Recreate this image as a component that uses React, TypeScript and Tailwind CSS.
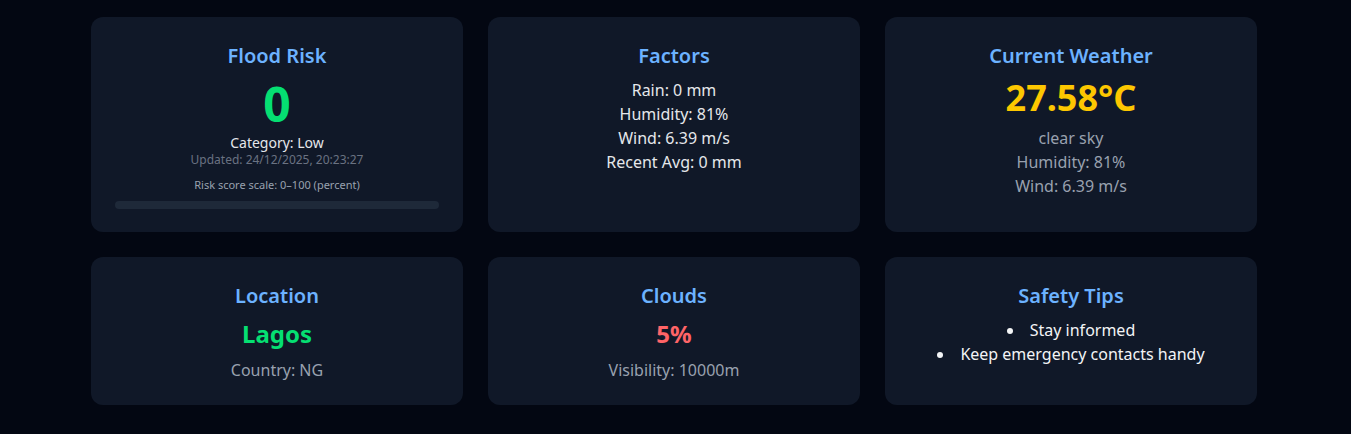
import React from 'react';

const font = { fontFamily: '"Noto Sans", "Open Sans", sans-serif' };

const Card: React.FC<{ title: string; className?: string; children: React.ReactNode }> = ({
  title,
  className = 'p-6',
  children,
}) => (
  <div className={`bg-gray-900 rounded-xl text-center ${className}`}>
    <h2 className="text-xl leading-7 font-semibold text-[#6cb2ff] mb-2 pt-px">{title}</h2>
    {children}
  </div>
);

export default function App() {
  return (
    <div className="min-h-[434px] bg-gray-950 pt-[17px]" style={font}>
      <div className="ml-[91px] w-[1166px] grid grid-cols-3 gap-[25px]">
        <Card title="Flood Risk" className="px-6 pt-6 pb-[23px]">
          <div className="text-5xl leading-[52px] font-bold text-green-400">0</div>
          <div className="text-sm leading-5 text-gray-200 mt-[3px]">Category: Low</div>
          <div className="text-xs leading-4 text-gray-500 -mt-px">Updated: 24/12/2025, 20:23:27</div>
          <div className="text-[11px] leading-4 text-gray-400 mt-[9px]">Risk score scale: 0–100 (percent)</div>
          <div className="h-2 rounded-full bg-gray-800 mt-2">
            <div className="h-2 rounded-full bg-green-400" style={{ width: '0%' }} />
          </div>
        </Card>
        <Card title="Factors">
          <div className="text-base leading-6 text-gray-200">
            <div>Rain: 0 mm</div>
            <div>Humidity: 81%</div>
            <div>Wind: 6.39 m/s</div>
            <div>Recent Avg: 0 mm</div>
          </div>
        </Card>
        <Card title="Current Weather">
          <div className="text-4xl leading-10 font-bold text-yellow-400">27.58°C</div>
          <div className="text-base leading-6 text-gray-400 mt-2">
            <div>clear sky</div>
            <div>Humidity: 81%</div>
            <div>Wind: 6.39 m/s</div>
          </div>
        </Card>
        <Card title="Location">
          <div className="text-2xl leading-8 font-bold text-green-400">Lagos</div>
          <div className="text-base leading-6 text-gray-400 mt-2 -mb-px">Country: NG</div>
        </Card>
        <Card title="Clouds">
          <div className="text-2xl leading-8 font-bold text-red-400">5%</div>
          <div className="text-base leading-6 text-gray-400 mt-2 -mb-px">Visibility: 10000m</div>
        </Card>
        <Card title="Safety Tips">
          <ul className="list-disc list-inside text-base leading-6 text-gray-100">
            <li>Stay informed</li>
            <li>Keep emergency contacts handy</li>
          </ul>
        </Card>
      </div>
    </div>
  );
}
